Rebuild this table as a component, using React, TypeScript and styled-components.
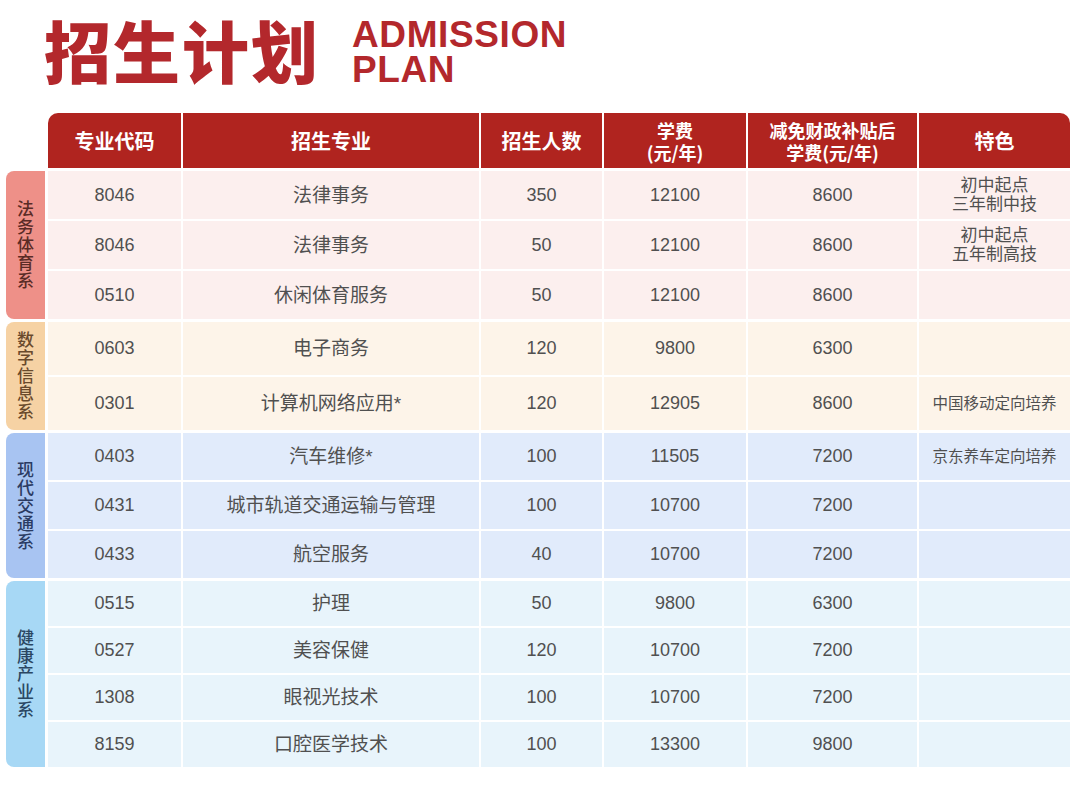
import React from "react";
import styled, { createGlobalStyle } from "styled-components";

const Global = createGlobalStyle`
  html, body { margin: 0; padding: 0; background: #ffffff; }
  body { font-family: "Liberation Sans", "Noto Sans CJK SC", sans-serif; }
`;

const COLS = "133px 296px 121px 142px 169px 151px";

const Page = styled.div`
  width: 1080px;
  height: 785px;
  background: #fff;
  overflow: hidden;
`;

const TitleBar = styled.div`
  height: 113px;
  display: flex;
  align-items: flex-start;
  padding: 0 0 0 44px;
  box-sizing: border-box;
  gap: 32px;
`;

const TitleCn = styled.h1`
  margin: 0;
  font-family: "Noto Sans CJK SC", sans-serif;
  font-weight: 900;
  font-size: 67px;
  line-height: 98px;
  color: #b3282c;
  letter-spacing: 2px;
`;

const TitleEn = styled.div`
  display: flex;
  flex-direction: column;
  margin-top: 17px;
`;

const EnLine = styled.span`
  display: block;
  height: 35px;
  font-family: "Liberation Sans", "Noto Sans", sans-serif;
  font-weight: 700;
  font-size: 37px;
  line-height: 35px;
  color: #b3282c;
  letter-spacing: 0.6px;
`;

const Table = styled.div`
  margin-left: 6px;
  width: 1064px;
  display: flex;
  flex-direction: column;
  gap: 3px;
`;

const HeaderRow = styled.div`
  margin-left: 42px;
  display: grid;
  grid-template-columns: ${COLS};
  column-gap: 2px;
  height: 55px;
`;

const HeadCell = styled.div<{ $first?: boolean; $last?: boolean; $small?: boolean }>`
  background: #b0241f;
  color: #fff;
  font-family: "Noto Sans CJK SC", sans-serif;
  font-weight: 700;
  font-size: ${(p) => (p.$small ? "18px" : "20px")};
  line-height: ${(p) => (p.$small ? "22px" : "24px")};
  display: flex;
  align-items: center;
  justify-content: center;
  text-align: center;
  white-space: pre-line;
  border-top-left-radius: ${(p) => (p.$first ? "10px" : "0")};
  border-top-right-radius: ${(p) => (p.$last ? "10px" : "0")};
`;

const Group = styled.div`
  display: flex;
  gap: 3px;
`;

const SideLabel = styled.div<{ $bg: string; $fg: string }>`
  width: 39px;
  flex: none;
  background: ${(p) => p.$bg};
  color: ${(p) => p.$fg};
  border-radius: 8px 0 0 8px;
  display: flex;
  align-items: center;
  justify-content: center;
`;

const LabelText = styled.span`
  writing-mode: vertical-rl;
  font-family: "Noto Sans CJK SC", sans-serif;
  font-weight: 500;
  font-size: 17px;
  letter-spacing: 1px;
`;

const Rows = styled.div`
  display: flex;
  flex-direction: column;
  gap: 2px;
`;

const Row = styled.div<{ $h: number }>`
  display: grid;
  grid-template-columns: ${COLS};
  column-gap: 2px;
  height: ${(p) => p.$h}px;
`;

const Cell = styled.div<{ $bg: string; $size?: number }>`
  background: ${(p) => p.$bg};
  color: #505050;
  font-size: ${(p) => p.$size ?? 19}px;
  line-height: 19px;
  display: flex;
  align-items: center;
  justify-content: center;
  text-align: center;
  white-space: pre-line;
`;

type R = [string, string, string, string, string, string];

const groups: {
  name: string;
  bg: string;
  fg: string;
  row: string;
  h: number;
  rows: R[];
}[] = [
  {
    name: "法务体育系",
    bg: "#ee9088",
    fg: "#5a2b26",
    row: "#fcefee",
    h: 48,
    rows: [
      ["8046", "法律事务", "350", "12100", "8600", "初中起点\n三年制中技"],
      ["8046", "法律事务", "50", "12100", "8600", "初中起点\n五年制高技"],
      ["0510", "休闲体育服务", "50", "12100", "8600", ""],
    ],
  },
  {
    name: "数字信息系",
    bg: "#f6d2a4",
    fg: "#6a4a2c",
    row: "#fdf4e9",
    h: 53,
    rows: [
      ["0603", "电子商务", "120", "9800", "6300", ""],
      ["0301", "计算机网络应用*", "120", "12905", "8600", "中国移动定向培养"],
    ],
  },
  {
    name: "现代交通系",
    bg: "#a8c4f2",
    fg: "#2b3b63",
    row: "#e1ebfb",
    h: 47,
    rows: [
      ["0403", "汽车维修*", "100", "11505", "7200", "京东养车定向培养"],
      ["0431", "城市轨道交通运输与管理", "100", "10700", "7200", ""],
      ["0433", "航空服务", "40", "10700", "7200", ""],
    ],
  },
  {
    name: "健康产业系",
    bg: "#a7d8f5",
    fg: "#2b4763",
    row: "#e8f4fb",
    h: 45,
    rows: [
      ["0515", "护理", "50", "9800", "6300", ""],
      ["0527", "美容保健", "120", "10700", "7200", ""],
      ["1308", "眼视光技术", "100", "10700", "7200", ""],
      ["8159", "口腔医学技术", "100", "13300", "9800", ""],
    ],
  },
];

export default function App() {
  return (
    <Page>
      <Global />
      <TitleBar>
        <TitleCn>招生计划</TitleCn>
        <TitleEn>
          <EnLine>ADMISSION</EnLine>
          <EnLine>PLAN</EnLine>
        </TitleEn>
      </TitleBar>
      <Table>
        <HeaderRow>
          <HeadCell $first>专业代码</HeadCell>
          <HeadCell>招生专业</HeadCell>
          <HeadCell>招生人数</HeadCell>
          <HeadCell $small>{"学费\n(元/年)"}</HeadCell>
          <HeadCell $small>{"减免财政补贴后\n学费(元/年)"}</HeadCell>
          <HeadCell $last>特色</HeadCell>
        </HeaderRow>
        {groups.map((g) => (
          <Group key={g.name}>
            <SideLabel $bg={g.bg} $fg={g.fg}>
              <LabelText>{g.name}</LabelText>
            </SideLabel>
            <Rows>
              {g.rows.map((r, i) => (
                <Row key={i} $h={g.h}>
                  {r.map((c, j) => (
                    <Cell
                      key={j}
                      $bg={g.row}
                      $size={j === 5 ? (c.includes("\n") ? 17 : 15.5) : j === 1 ? 19 : 18}
                    >
                      {c}
                    </Cell>
                  ))}
                </Row>
              ))}
            </Rows>
          </Group>
        ))}
      </Table>
    </Page>
  );
}
